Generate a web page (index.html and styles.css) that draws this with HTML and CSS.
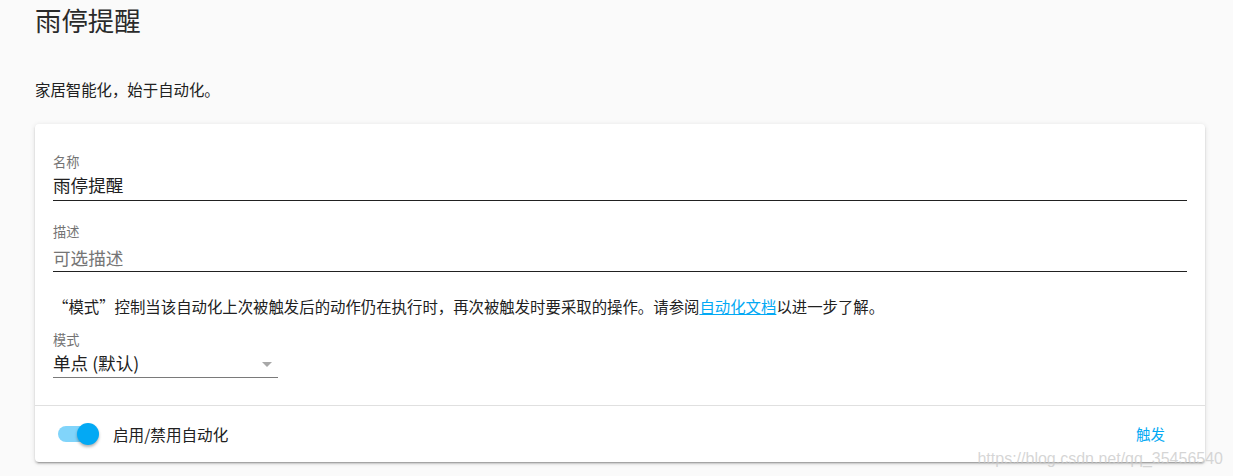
FILE: index.html
```html
<!DOCTYPE html>
<html lang="zh-CN">
<head>
<meta charset="utf-8">
<title>雨停提醒</title>
<link rel="stylesheet" href="styles.css">
</head>
<body>
<div class="page">
  <h1 class="title">雨停提醒</h1>
  <p class="intro">家居智能化，始于自动化。</p>
  <div class="card">
    <div class="card-content">
      <div class="field">
        <div class="field-label">名称</div>
        <div class="field-value">雨停提醒</div>
      </div>
      <div class="field field-desc">
        <div class="field-label">描述</div>
        <div class="field-value placeholder">可选描述</div>
      </div>
      <p class="help">“模式”控制当该自动化上次被触发后的动作仍在执行时，再次被触发时要采取的操作。请参阅<a class="link" href="#">自动化文档</a>以进一步了解。</p>
      <div class="select">
        <div class="field-label">模式</div>
        <div class="select-row">
          <span class="select-value">单点 (默认)</span>
          <span class="arrow"></span>
        </div>
      </div>
    </div>
    <div class="card-actions">
      <div class="toggle">
        <span class="track"></span>
        <span class="knob"></span>
      </div>
      <span class="toggle-label">启用/禁用自动化</span>
      <span class="spacer"></span>
      <button class="btn">触发</button>
    </div>
  </div>
</div>
<div class="watermark">https://blog.csdn.net/qq_35456540</div>
</body>
</html>
```

FILE: styles.css
```css
html, body {
  margin: 0;
  padding: 0;
  background: #fafafa;
}
body {
  font-family: "Noto Sans CJK SC", "Noto Sans", sans-serif;
  color: #212121;
  width: 1233px;
  height: 476px;
  overflow: hidden;
  position: relative;
}
.page {
  padding: 0 28px 0 35px;
}
.title {
  margin: 0;
  font-size: 26.4px;
  line-height: 40px;
  font-weight: 400;
  color: #2a2a2a;
}
.intro {
  margin: 39px 0 0 0;
  font-size: 15.4px;
  line-height: 20px;
}
.card {
  margin-top: 25px;
  background: #fff;
  border-radius: 4px;
  box-shadow: 0 2px 2px 0 rgba(0,0,0,0.14), 0 1px 5px 0 rgba(0,0,0,0.12), 0 3px 1px -2px rgba(0,0,0,0.2);
}
.card-content {
  padding: 30px 18px 27px 18px;
  border-bottom: 1px solid #e0e0e0;
}
.field {
  border-bottom: 1px solid #212121;
}
.field-label {
  font-size: 13.2px;
  line-height: 16px;
  color: #737373;
}
.field-value {
  font-size: 17.6px;
  line-height: 30px;
}
.field-desc {
  margin-top: 23px;
}
.field-desc .field-value {
  padding-top: 5px;
  line-height: 26px;
}
.placeholder {
  color: #757575;
}
.help {
  margin: 24px 0 0 0;
  font-size: 15.4px;
  line-height: 20px;
}
.link {
  color: #03a9f4;
  text-decoration: underline;
}
.select {
  margin-top: 16px;
  width: 225px;
  border-bottom: 1px solid #7a7a7a;
}
.select-row {
  display: flex;
  align-items: center;
  padding-top: 1px;
  height: 28px;
}
.select-value {
  flex: 1;
  font-size: 17.6px;
  line-height: 28px;
}
.arrow {
  width: 0;
  height: 0;
  border-left: 5px solid transparent;
  border-right: 5px solid transparent;
  border-top: 5px solid #a8a8a8;
  margin-right: 6px;
  margin-top: 2px;
}
.card-actions {
  display: flex;
  align-items: center;
  height: 56px;
  padding: 0 40px 0 23px;
}
.toggle {
  position: relative;
  width: 41px;
  height: 22px;
}
.track {
  position: absolute;
  left: 0;
  top: 3px;
  width: 39px;
  height: 16px;
  border-radius: 8px;
  background: #81d4fa;
}
.knob {
  position: absolute;
  right: 0;
  top: 0;
  width: 22px;
  height: 22px;
  border-radius: 50%;
  background: #03a9f4;
  box-shadow: 0 2px 3px rgba(0,0,0,0.3);
}
.toggle-label {
  margin-left: 14px;
  font-size: 15.6px;
  line-height: 20px;
}
.spacer {
  flex: 1;
}
.btn {
  border: 0;
  background: transparent;
  padding: 0;
  font-family: "Noto Sans CJK SC", "Noto Sans", sans-serif;
  font-size: 14.5px;
  line-height: 20px;
  color: #03a9f4;
}
.watermark {
  position: absolute;
  right: 10px;
  bottom: 8px;
  font-family: "Liberation Sans", Arial, sans-serif;
  font-size: 16px;
  color: rgba(200, 200, 200, 0.75);
}
```
